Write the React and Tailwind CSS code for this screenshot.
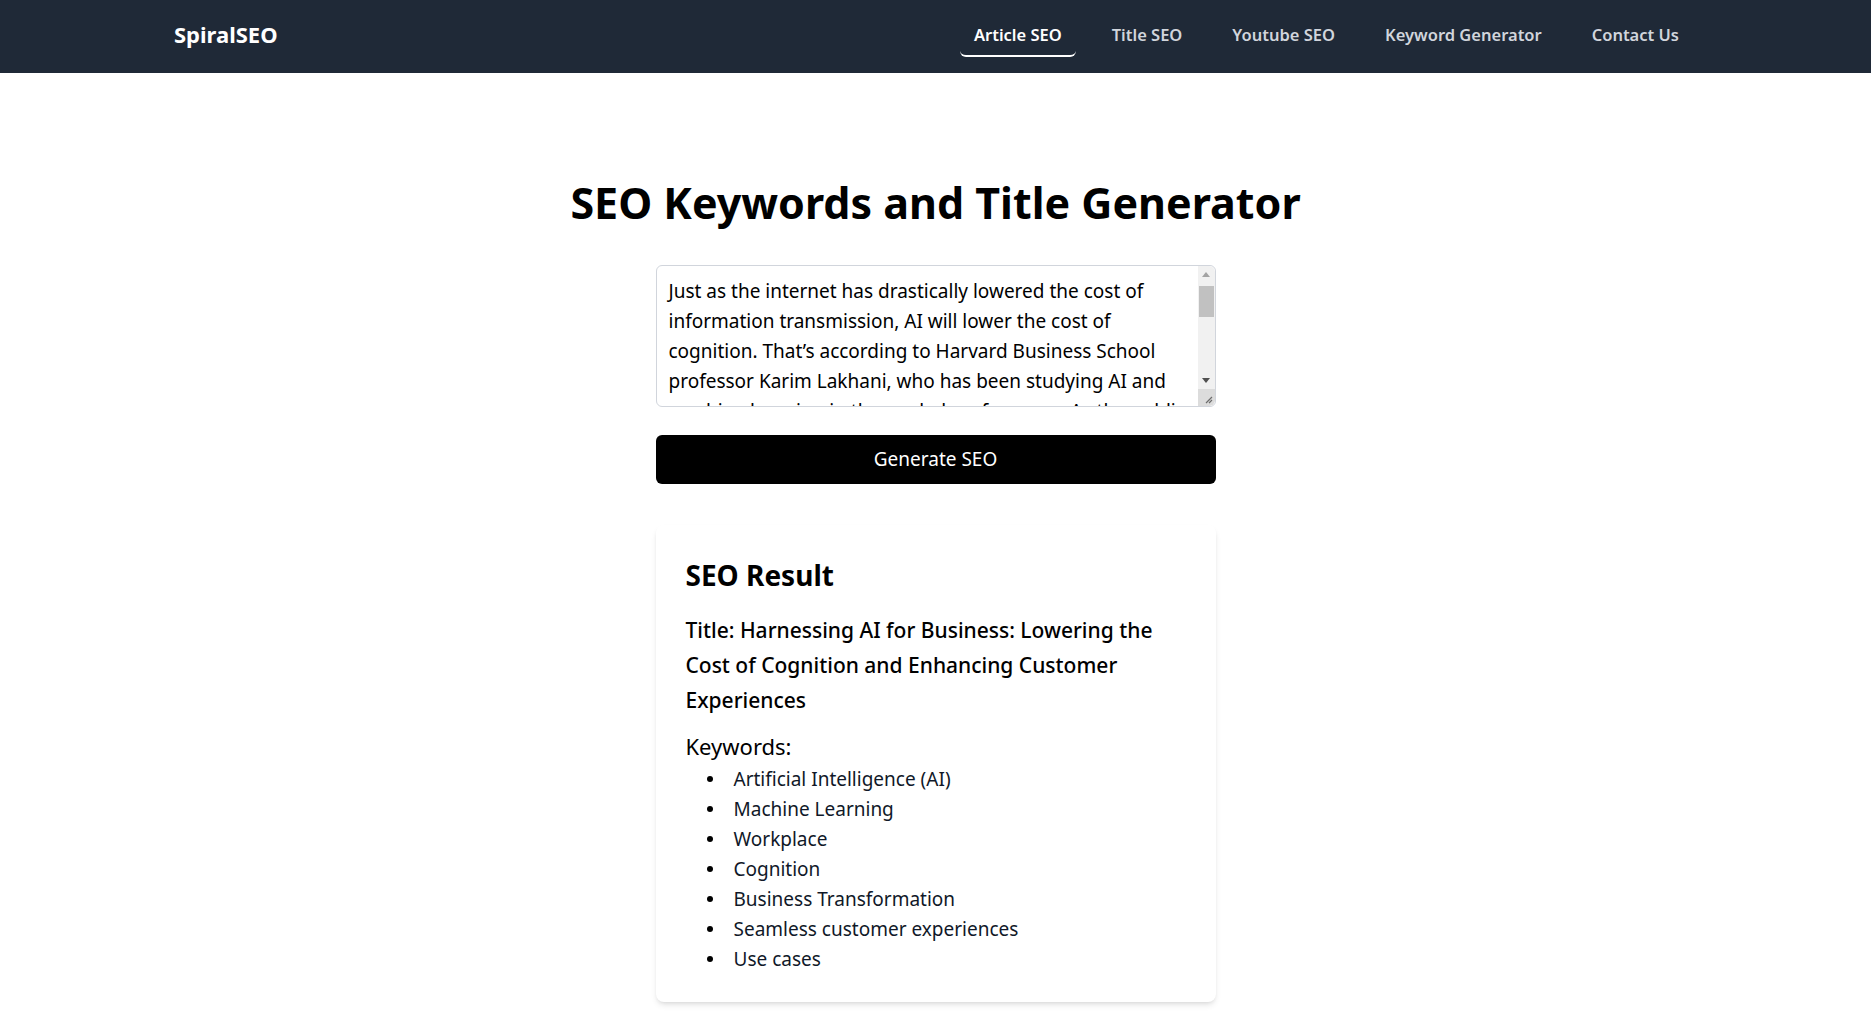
import React, { useState } from "react";

const navLinks = ["Article SEO", "Title SEO", "Youtube SEO", "Keyword Generator", "Contact Us"];

const keywords = [
  "Artificial Intelligence (AI)",
  "Machine Learning",
  "Workplace",
  "Cognition",
  "Business Transformation",
  "Seamless customer experiences",
  "Use cases",
];

const articleText =
  "Just as the internet has drastically lowered the cost of information transmission, AI will lower the cost of cognition. That’s according to Harvard Business School professor Karim Lakhani, who has been studying AI and machine learning in the workplace for years. As the public comes to grasp what it means for businesses, he says, companies that put AI to work will replace those that don’t, and leaders will need to rethink how they deliver seamless customer experiences across many use cases.";

const Navbar = () => {
  const [active, setActive] = useState("Article SEO");
  return (
    <nav className="bg-[#1f2937] h-[73px] flex items-center justify-between pl-[174px] pr-[178px]">
      <span className="text-white text-[22px] font-bold -mt-1">SpiralSEO</span>
      <ul className="flex items-center gap-[22px]">
        {navLinks.map((link) => (
          <li key={link}>
            <button
              onClick={() => setActive(link)}
              className={
                active === link
                  ? "px-3.5 pt-1.5 pb-[8px] text-[16.5px] leading-6 font-semibold text-white border-b-2 border-white rounded-md"
                  : "px-3.5 pt-1.5 pb-[10px] text-[16.5px] leading-6 font-semibold text-gray-300"
              }
            >
              {link}
            </button>
          </li>
        ))}
      </ul>
    </nav>
  );
};

// textarea scrollbar, drawn like the classic desktop one
const Scrollbar = () => (
  <div className="absolute right-[1px] top-[1px] bottom-[1px] w-[17px] bg-[#f1f1f1] flex flex-col rounded-tr-md rounded-br-md overflow-hidden pointer-events-none">
    <div className="h-[17px] flex items-center justify-center">
      <svg width="8" height="5" viewBox="0 0 8 5">
        <path d="M0 5 L4 0 L8 5 Z" fill="#a3a3a3" />
      </svg>
    </div>
    <div className="mx-[1px] h-[31px] mt-[3px] bg-[#c1c1c1]" />
    <div className="flex-1" />
    <div className="h-[17px] flex items-center justify-center">
      <svg width="8" height="5" viewBox="0 0 8 5">
        <path d="M0 0 L8 0 L4 5 Z" fill="#505050" />
      </svg>
    </div>
    <div className="h-[17px] bg-[#dcdcdc] flex items-end justify-end p-[2px]">
      <svg width="10" height="10" viewBox="0 0 10 10">
        <path d="M9 3 L3 9 M9 6 L6 9" stroke="#6b6b6b" strokeWidth="1.2" />
      </svg>
    </div>
  </div>
);

const App = () => {
  const [text, setText] = useState(articleText);

  return (
    <div className="min-h-screen bg-white font-['Segoe_UI','Noto_Sans',sans-serif] text-black">
      <Navbar />

      <main className="flex flex-col items-center pt-[108px] pb-10">
        <h1 className="text-[43px] leading-[43px] font-bold">SEO Keywords and Title Generator</h1>

        <div className="w-[560px] mt-[41px] flex flex-col">
          <div className="relative">
            <textarea
              value={text}
              onChange={(e) => setText(e.target.value)}
              className="block w-full h-[142px] border border-gray-300 rounded-md pl-3 pr-[29px] py-2.5 text-[19px] leading-[30px] text-black outline-none resize-none [scrollbar-width:none]"
            />
            <Scrollbar />
          </div>

          <button className="mt-7 h-[49px] w-full bg-black text-white text-[19px] rounded-md">
            Generate SEO
          </button>

          <div className="mt-[41px] bg-white rounded-lg shadow-md px-[30px] pt-8 pb-7">
            <h2 className="text-[28px] leading-9 font-bold">SEO Result</h2>
            <p className="mt-5 text-[21px] leading-[35px] font-medium">
              Title: Harnessing AI for Business: Lowering the Cost of Cognition and Enhancing Customer
              Experiences
            </p>
            <p className="mt-[13px] text-[22px] leading-[30px]">Keywords:</p>
            <ul className="mt-[3px] pl-[21px] text-[19px] leading-[30px] text-gray-900">
              {keywords.map((k) => (
                <li key={k} className="flex items-center gap-[21px]">
                  <span className="w-[6px] h-[6px] rounded-full bg-black shrink-0" />
                  {k}
                </li>
              ))}
            </ul>
          </div>
        </div>
      </main>
    </div>
  );
};

export default App;
